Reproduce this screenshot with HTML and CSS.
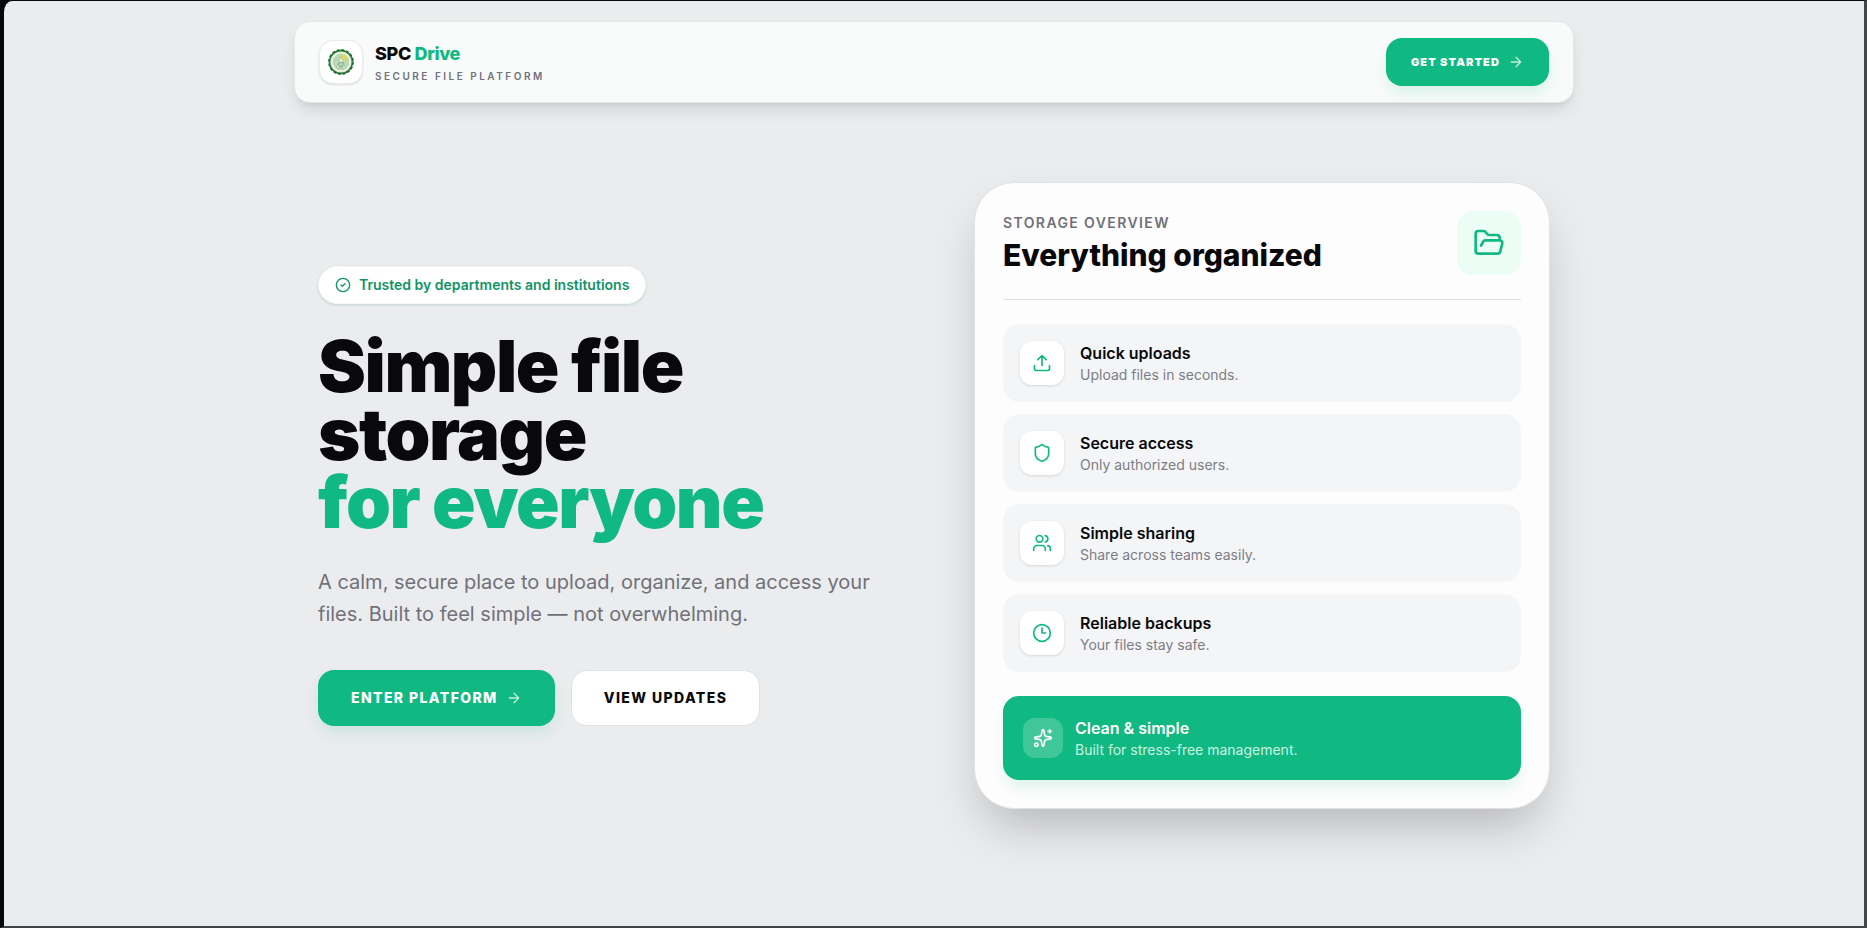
FILE: index.html
```html
<!DOCTYPE html>
<html lang="en">
<head>
  <meta charset="UTF-8">
  <meta name="viewport" content="width=device-width, initial-scale=1.0">
  <title>SPC Drive</title>
  <link rel="stylesheet" href="styles.css">
</head>
<body>

<div class="page">
  <header class="navbar">
    <a href="#" class="brand">
      <span class="brand-logo">
        <svg viewBox="0 0 26 26" width="26" height="26" aria-hidden="true">
          <circle cx="13" cy="13" r="11.4" fill="#e3ecd8" stroke="#2c7a3c" stroke-width="1.6"/>
          <circle cx="13" cy="13" r="12.2" fill="none" stroke="#1f6b30" stroke-width="1.4" stroke-dasharray="3 1.79"/>
          <circle cx="13" cy="13" r="9" fill="#bcd8b4" stroke="#f1f5ea" stroke-width="1.2"/>
          <path d="M13.5 7l3-2 2.5 4-3 3.5z" fill="#eadb45"/>
          <path d="M13 7L8.5 19h2.5l2-5 2 5h2.5z" fill="#f1f5e6" stroke="#8ab795" stroke-width=".6"/>
          <circle cx="13" cy="15.5" r="2.4" fill="#b9d5c4" stroke="#5f9a78" stroke-width=".8"/>
        </svg>
      </span>
      <span class="brand-text">
        <span class="brand-name">SPC <em>Drive</em></span>
        <span class="brand-tagline">Secure File Platform</span>
      </span>
    </a>
    <button type="button" class="btn btn-primary btn-small">
      Get Started
      <svg class="icon" viewBox="0 0 24 24" width="16" height="16"><path d="M5 12h14M12 5l7 7-7 7"/></svg>
    </button>
  </header>

  <main class="hero">
    <section class="intro">
      <div class="pill">
        <svg class="icon" viewBox="0 0 24 24" width="16" height="16"><circle cx="12" cy="12" r="10"/><path d="M9 12l2 2 4-4"/></svg>
        Trusted by departments and institutions
      </div>
      <h1>Simple file storage <span>for everyone</span></h1>
      <p class="lead">A calm, secure place to upload, organize, and access your files. Built to feel simple — not overwhelming.</p>
      <div class="actions">
        <button type="button" class="btn btn-primary">
          Enter Platform
          <svg class="icon" viewBox="0 0 24 24" width="16" height="16"><path d="M5 12h14M12 5l7 7-7 7"/></svg>
        </button>
        <button type="button" class="btn btn-light">View Updates</button>
      </div>
    </section>

    <section class="card">
      <div class="card-header">
        <div>
          <p class="card-label">Storage Overview</p>
          <h2>Everything organized</h2>
        </div>
        <span class="card-icon">
          <svg class="icon" viewBox="0 0 24 24" width="32" height="32"><path d="m6 14 1.5-2.9A2 2 0 0 1 9.24 10H20a2 2 0 0 1 1.94 2.5l-1.54 6a2 2 0 0 1-1.95 1.5H4a2 2 0 0 1-2-2V5a2 2 0 0 1 2-2h3.9a2 2 0 0 1 1.69.9l.81 1.2a2 2 0 0 0 1.67.9H18a2 2 0 0 1 2 2v2"/></svg>
        </span>
      </div>

      <ul class="features">
        <li class="feature">
          <span class="feature-icon">
            <svg class="icon" viewBox="0 0 24 24" width="20" height="20"><path d="M12 3v12M17 8l-5-5-5 5M21 15v4a2 2 0 0 1-2 2H5a2 2 0 0 1-2-2v-4"/></svg>
          </span>
          <div>
            <h3>Quick uploads</h3>
            <p>Upload files in seconds.</p>
          </div>
        </li>
        <li class="feature">
          <span class="feature-icon">
            <svg class="icon" viewBox="0 0 24 24" width="20" height="20"><path d="M20 13c0 5-3.5 7.5-7.66 8.95a1 1 0 0 1-.67-.01C7.5 20.5 4 18 4 13V6a1 1 0 0 1 1-1c2 0 4.5-1.2 6.24-2.72a1.17 1.17 0 0 1 1.52 0C14.51 3.81 17 5 19 5a1 1 0 0 1 1 1z"/></svg>
          </span>
          <div>
            <h3>Secure access</h3>
            <p>Only authorized users.</p>
          </div>
        </li>
        <li class="feature">
          <span class="feature-icon">
            <svg class="icon" viewBox="0 0 24 24" width="20" height="20"><path d="M16 21v-2a4 4 0 0 0-4-4H6a4 4 0 0 0-4 4v2M16 3.13a4 4 0 0 1 0 7.75M22 21v-2a4 4 0 0 0-3-3.87"/><circle cx="9" cy="7" r="4"/></svg>
          </span>
          <div>
            <h3>Simple sharing</h3>
            <p>Share across teams easily.</p>
          </div>
        </li>
        <li class="feature">
          <span class="feature-icon">
            <svg class="icon" viewBox="0 0 24 24" width="20" height="20"><circle cx="12" cy="12" r="10"/><path d="M12 6v6h4.5"/></svg>
          </span>
          <div>
            <h3>Reliable backups</h3>
            <p>Your files stay safe.</p>
          </div>
        </li>
      </ul>

      <div class="banner">
        <span class="banner-icon">
          <svg class="icon" viewBox="0 0 24 24" width="20" height="20"><path d="M11.02 2.81a1 1 0 0 1 1.96 0l1.05 5.56a2 2 0 0 0 1.6 1.6l5.56 1.05a1 1 0 0 1 0 1.96l-5.56 1.05a2 2 0 0 0-1.6 1.6l-1.05 5.56a1 1 0 0 1-1.96 0l-1.05-5.56a2 2 0 0 0-1.6-1.6l-5.56-1.05a1 1 0 0 1 0-1.96l5.56-1.05a2 2 0 0 0 1.6-1.6zM20 2v4M22 4h-4"/><circle cx="4" cy="20" r="2"/></svg>
        </span>
        <div>
          <h3>Clean &amp; simple</h3>
          <p>Built for stress-free management.</p>
        </div>
      </div>
    </section>
  </main>
</div>

</body>
</html>
```

FILE: styles.css
```css
* {
  box-sizing: border-box;
}

html {
  background-color: #07080c;
}

body {
  margin: 0;
  min-height: 100vh;
  font-family: Inter, 'Liberation Sans', sans-serif;
  color: #09090b;
  border-style: solid;
  border-width: 1px 3px 2px 4px;
  border-color: #07080c #444546 #444546 #07080c;
  border-top-left-radius: 12px;
  background-color: #ebecee;
}

h1, h2, h3, p, ul {
  margin: 0;
  padding: 0;
}

.page {
  max-width: 1280px;
  margin: 0 auto;
  padding-top: 20px;
}

.icon {
  fill: none;
  stroke: currentColor;
  stroke-width: 2;
  stroke-linecap: round;
  stroke-linejoin: round;
  flex-shrink: 0;
}

/* Navbar */
.navbar {
  display: flex;
  justify-content: space-between;
  align-items: center;
  padding: 16px 24px;
  background-color: #f9fbfa;
  border: 1px solid #e4e6e8;
  border-radius: 16px;
  box-shadow: 0 10px 15px -3px rgba(0, 0, 0, 0.1), 0 4px 6px -4px rgba(0, 0, 0, 0.1);
}

.brand {
  display: flex;
  align-items: center;
  gap: 12px;
  color: inherit;
  text-decoration: none;
}

.brand-logo {
  display: flex;
  align-items: center;
  justify-content: center;
  width: 44px;
  height: 44px;
  background-color: #fff;
  border: 1px solid #e8eaec;
  border-radius: 14px;
  box-shadow: 0 1px 2px rgba(0, 0, 0, 0.12);
}

.brand-text {
  display: flex;
  flex-direction: column;
}

.brand-name {
  font-size: 18px;
  line-height: 28px;
  font-weight: 800;
  letter-spacing: -0.02em;
}

.brand-name em {
  font-style: normal;
  color: #10b981;
}

.brand-tagline {
  font-size: 10px;
  line-height: 16px;
  font-weight: 600;
  letter-spacing: 0.25em;
  text-transform: uppercase;
  color: #71717a;
}

/* Buttons */
.btn {
  display: flex;
  align-items: center;
  justify-content: center;
  gap: 8px;
  height: 56px;
  padding: 0 32px;
  border: 1px solid transparent;
  border-radius: 16px;
  font-family: inherit;
  font-size: 14px;
  font-weight: 800;
  letter-spacing: 0.1em;
  text-transform: uppercase;
  cursor: pointer;
}

.btn .icon {
  opacity: 0.75;
}

.btn-primary {
  background-color: #10b981;
  color: #fff;
  box-shadow: 0 8px 16px -2px rgba(16, 185, 129, 0.16);
}

.btn-light {
  background-color: #fff;
  color: #09090b;
  border-color: #e0e2e5;
}

.btn-small {
  height: 48px;
  padding: 0 24px;
  font-size: 11px;
  font-weight: 900;
}

/* Hero */
.hero {
  display: grid;
  grid-template-columns: 1fr 1fr;
  gap: 80px;
  align-items: center;
  padding: 79px 24px;
}

.pill {
  display: inline-flex;
  align-items: center;
  gap: 8px;
  height: 38px;
  padding: 0 16px;
  background-color: #fff;
  border: 1px solid #f6f8f8;
  border-radius: 19px;
  box-shadow: 0 1px 3px rgba(16, 120, 90, 0.2);
  color: #0f9468;
  font-size: 14px;
  font-weight: 600;
}

h1 {
  margin-top: 28px;
  font-size: 72px;
  line-height: 68px;
  font-weight: 900;
  letter-spacing: -0.02em;
}

h1 span {
  display: block;
  color: #10b981;
}

.lead {
  margin-top: 30px;
  max-width: 576px;
  font-size: 20px;
  line-height: 32px;
  color: #71717a;
}

.actions {
  display: flex;
  gap: 16px;
  margin-top: 40px;
}

/* Storage card */
.card {
  padding: 28px;
  background-color: #fdfdfd;
  border: 1px solid #e0e2e5;
  border-radius: 40px;
  box-shadow: 0 25px 50px -12px rgba(0, 0, 0, 0.25);
}

.card-header {
  display: flex;
  justify-content: space-between;
  align-items: center;
  padding-bottom: 24px;
  margin-bottom: 24px;
  border-bottom: 1px solid #dedfe2;
}

.card-label {
  font-size: 14px;
  line-height: 20px;
  font-weight: 600;
  letter-spacing: 0.1em;
  text-transform: uppercase;
  color: #71717a;
}

h2 {
  margin-top: 4px;
  font-size: 30px;
  line-height: 36px;
  font-weight: 800;
}

.card-icon {
  display: flex;
  align-items: center;
  justify-content: center;
  width: 64px;
  height: 64px;
  background-color: #ecfdf5;
  border-radius: 16px;
  color: #10b981;
}

.features {
  display: flex;
  flex-direction: column;
  gap: 12px;
  list-style: none;
}

.feature {
  display: flex;
  align-items: center;
  gap: 16px;
  padding: 16px;
  background-color: #f4f5f7;
  border: 1px solid #f6f7f9;
  border-radius: 16px;
}

.feature-icon {
  display: flex;
  align-items: center;
  justify-content: center;
  width: 44px;
  height: 44px;
  background-color: #fff;
  border-radius: 12px;
  box-shadow: 0 1px 3px rgba(0, 0, 0, 0.12);
  color: #10b981;
}

h3 {
  font-size: 16px;
  line-height: 24px;
  font-weight: 600;
}

.feature p,
.banner p {
  font-size: 14px;
  line-height: 20px;
  color: #7c7d86;
}

.banner {
  display: flex;
  align-items: center;
  gap: 12px;
  margin-top: 24px;
  padding: 20px;
  background-color: #10b981;
  border-radius: 16px;
  box-shadow: 0 10px 15px -3px rgba(16, 185, 129, 0.14);
  color: #fff;
}

.banner p {
  color: #c9f2e2;
}

.banner-icon {
  display: flex;
  align-items: center;
  justify-content: center;
  width: 40px;
  height: 40px;
  background-color: rgba(255, 255, 255, 0.2);
  border-radius: 12px;
}
```
